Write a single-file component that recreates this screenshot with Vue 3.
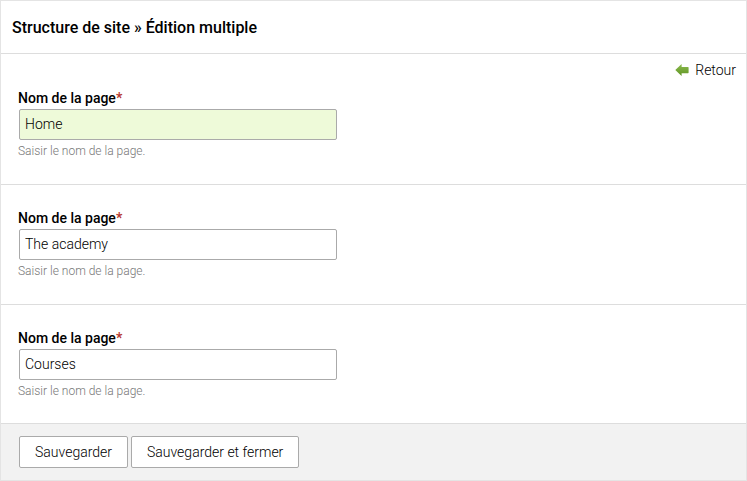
<script setup>
import { ref } from 'vue'

const pages = ref([
  { id: 'page-1', name: 'Home' },
  { id: 'page-2', name: 'The academy' },
  { id: 'page-3', name: 'Courses' }
])
</script>

<template>
  <main class="panel">
    <header class="header">
      <h1>Structure de site » Édition multiple</h1>
    </header>
    <nav class="back">
      <a href="#">
        <svg width="14" height="12" viewBox="0 0 14 12" aria-hidden="true">
          <defs>
            <linearGradient id="arrow" x1="0" y1="0" x2="0" y2="1">
              <stop offset="0" stop-color="#8dbb50" />
              <stop offset="1" stop-color="#5f9422" />
            </linearGradient>
          </defs>
          <path d="M0.3 6 L6.6 0 V3 H13 Q13.6 3 13.6 3.6 V8.6 Q13.6 9.2 13 9.2 H6.6 V12 Z" fill="url(#arrow)" />
        </svg>
        Retour
      </a>
    </nav>
    <form @submit.prevent>
      <section v-for="page in pages" :key="page.id" class="item">
        <label :for="page.id">Nom de la page<span class="required">*</span></label>
        <input :id="page.id" v-model="page.name" type="text" :class="{ active: page.id === 'page-1' }" />
        <p>Saisir le nom de la page.</p>
      </section>
      <footer class="actions">
        <button type="submit">Sauvegarder</button>
        <button type="submit">Sauvegarder et fermer</button>
      </footer>
    </form>
  </main>
</template>

<style>
body {
  background: #fff;
}
</style>

<style scoped>
.panel {
  position: relative;
  box-sizing: border-box;
  border: 1px solid #e4e4e4;
  color: #000;
  font: 300 14px/20px Roboto, sans-serif;
}
.header {
  padding: 17px 11px 15px;
  border-bottom: 1px solid #ddd;
}
h1 {
  margin: 0;
  font-size: 16px;
  line-height: 20px;
  font-weight: 500;
}
.back {
  position: absolute;
  top: 59px;
  right: 10px;
}
.back a {
  display: flex;
  align-items: center;
  gap: 6px;
  color: #000;
  text-decoration: none;
}
.item {
  padding: 34px 17px 23px;
  border-bottom: 1px solid #ddd;
}
.item + .item {
  padding-top: 23px;
}
.item:last-of-type {
  padding-bottom: 22px;
}
label {
  display: block;
  font-weight: 500;
}
.required {
  color: #b83a32;
  font-weight: 700;
}
input {
  display: block;
  box-sizing: border-box;
  width: 318px;
  max-width: 100%;
  height: 31px;
  margin: 1px 1px 0;
  padding: 0 5px 2px;
  border: 1px solid #aaa;
  border-radius: 2px;
  background: #fff;
  color: #000;
  font: inherit;
}
input.active {
  background: #eefad9;
}
.item p {
  margin: 0;
  padding-top: 1px;
  color: #777;
  font-size: 12px;
}
.actions {
  display: flex;
  flex-wrap: wrap;
  gap: 3px;
  padding: 12px 18px;
  background: #f2f2f2;
}
button {
  height: 32px;
  padding: 0 15px;
  border: 1px solid #aaa;
  border-radius: 2px;
  background: #fff;
  color: #000;
  font: inherit;
}
</style>
